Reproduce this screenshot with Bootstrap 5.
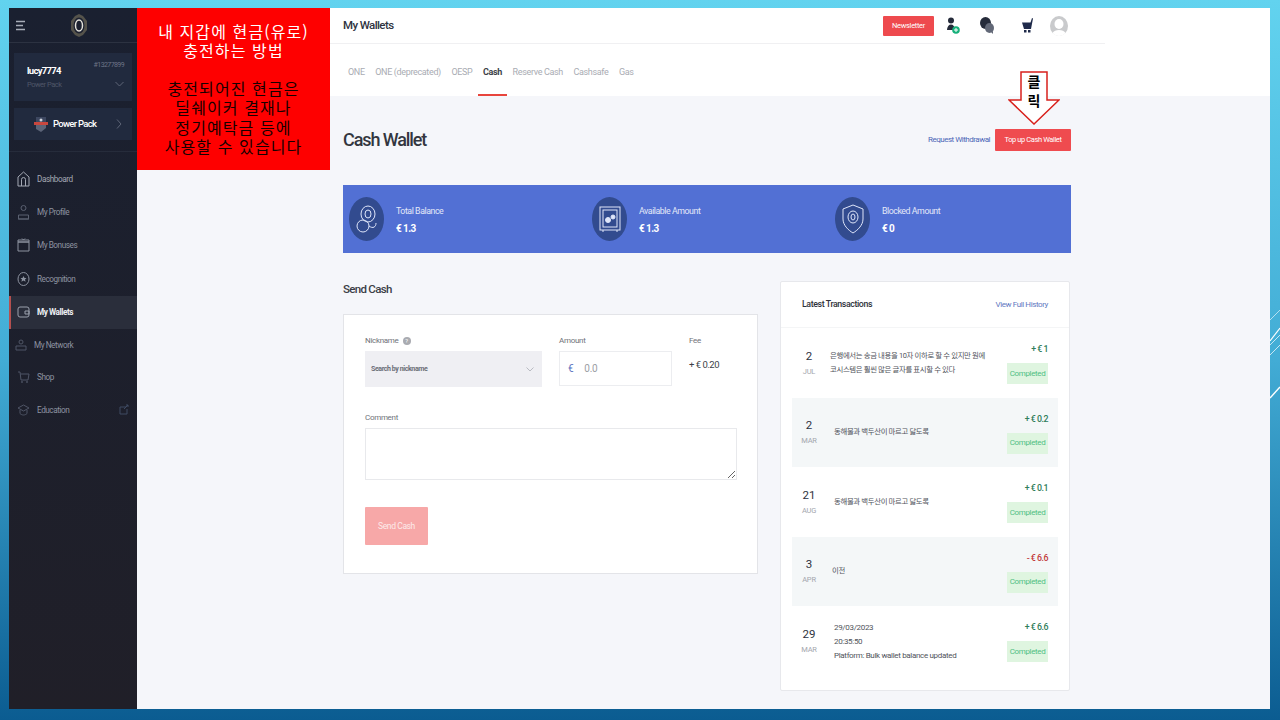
<!DOCTYPE html>
<html lang="ko">
<head>
<meta charset="UTF-8">
<title>My Wallets</title>
<link href="https://cdn.jsdelivr.net/npm/bootstrap@5.3.0/dist/css/bootstrap.min.css" rel="stylesheet">
<style>
  html, body { height: 100%; margin: 0; overflow: hidden; }
  body { background: linear-gradient(180deg, #62d3ef 0%, #42acd5 50%, #0b5c91 100%); font-family: Roboto, "Noto Sans CJK KR", sans-serif; color: #33363f; }
  .slide { height: 720px; padding: 8px 0 11px 9px; }
  .app-window { width: 1261px; height: 701px; background: #f5f6fa; }
  .deco-strip { width: 10px; padding-top: 302px; }
  /* sidebar */
  .side { width: 128px; background: linear-gradient(180deg, #1a2030, #201f28); flex: none; color: #9aa0ad; font-size: 9px; }
  .side-top { height: 35px; border-bottom: 1px solid #2c3241; padding: 0 6px; }
  .side-box { background: #212a3e; margin: 0 5px; }
  .user-box { height: 48px; margin-top: 10px; padding: 7px 8px 0 13px; }
  .user-name { color: #fff; font-size: 9.5px; font-weight: 700; letter-spacing: -.7px; margin-top: 4px; }
  .user-pack { color: #4f5668; font-size: 7.5px; letter-spacing: -.5px; margin-top: 1px; }
  .user-id { color: #6d7486; font-size: 7px; letter-spacing: -.6px; }
  .pack-box { height: 32px; margin-top: 7px; color: #fff; font-size: 9.5px; font-weight: 500; letter-spacing: -.7px; padding: 0 10px 0 19px; }
  .side-rule { border-top: 1px solid #262c3b; margin-top: 11px; height: 11px; }
  .side-link { height: 33.4px; padding: 0 8px; gap: 7px; color: #8d93a0; font-size: 8.2px; letter-spacing: -.45px; }
  .side-link.on { background: #2a2e3b; border-left: 2px solid #b4504f; padding-left: 6px; color: #eef0f4; font-weight: 700; }
  .side-link svg { flex: none; }
  /* top */
  .left-pane { width: 193px; flex: none; }
  .red-note { height: 162px; background: #fe0000; color: #fff; font-size: 16px; letter-spacing: 1.1px; line-height: 19.4px; text-align: center; padding-top: 14px; font-family: "Noto Sans CJK KR", sans-serif; }
  .red-note p { margin: 0; }
  .red-dark { color: #160000; margin-top: 18px !important; }
  .main-pane { flex: 1; min-width: 0; }
  .topbar { height: 88px; background: #fff; }
  .top-row { height: 36px; width: 775px; border-bottom: 1px solid #f0f0f2; padding-left: 13px; }
  .top-title { font-size: 11.5px; font-weight: 500; letter-spacing: -.6px; color: #2e3340; }
  .news-btn { width: 51px; height: 20px; background: #ee4a4e; color: #fff; font-size: 7.5px; letter-spacing: -.3px; border-radius: 1px; }
  .tab-row { padding-left: 18px; height: 52px; gap: 10.6px; font-size: 9px; letter-spacing: -.35px; color: #a9acb3; }
  .tab-item { position: relative; height: 100%; display: flex; align-items: center; padding-top: 5px; }
  .tab-item.on { color: #3c3f48; font-weight: 700; }
  .tab-item.on::after { content: ""; position: absolute; left: -5px; right: -5px; bottom: 0; height: 2px; background: #e8453c; }
  /* content */
  .content-wrap { width: 728px; margin-left: 13px; position: relative; }
  .wallet-head { height: 89px; padding-bottom: 2px; }
  .wallet-title { font-size: 18px; font-weight: 500; letter-spacing: -1.1px; color: #33363f; margin: 0; }
  .with-link { color: #4d66b8; font-size: 8px; letter-spacing: -.5px; text-decoration: none; }
  .topup-btn { width: 76px; height: 22px; background: #ef4b4f; color: #fff; font-size: 7.5px; letter-spacing: -.4px; border-radius: 1px; margin-left: 5px; }
  .click-arrow { position: absolute; left: 665px; top: -25px; width: 52px; height: 54px; }
  .click-txt { position: absolute; left: 665px; top: -25px; width: 52px; text-align: center; color: #000; font-size: 14px; line-height: 19px; font-weight: 700; padding-top: 1px; font-family: "Noto Sans CJK KR", sans-serif; }
  .balance-band { height: 68px; background: #5270d4; color: #fff; padding-left: 6px; }
  .balance-cell { width: 243px; flex: none; gap: 12px; }
  .coin-disc { width: 35px; height: 44px; border-radius: 50%; background: #324b8f; flex: none; }
  .bal-text { padding-top: 2px; }
  .bal-label { font-size: 8.8px; letter-spacing: -.45px; color: #e3e8f8; line-height: 12px; }
  .bal-value { font-size: 10px; font-weight: 700; letter-spacing: -.6px; line-height: 12px; margin-top: 6px; }
  .lower-row { margin-top: 28px; }
  .send-col { width: 415px; flex: none; }
  .send-title { font-size: 11.5px; font-weight: 500; letter-spacing: -.7px; color: #3b3e47; margin: 0; padding-top: 1px; height: 33px; line-height: 14px; }
  .send-form { height: 260px; background: #fff; border: 1px solid #e3e4e8; padding: 20px 21px 0; }
  .form-lbl { font-size: 8px; color: #6f7279; letter-spacing: -.3px; line-height: 12px; margin-bottom: 4px; }
  .hint-dot { display: inline-flex; width: 8px; height: 8px; border-radius: 50%; background: #a9abb1; color: #fff; font-size: 6px; align-items: center; justify-content: center; margin-left: 4px; }
  .nick-select { width: 177px; height: 36px; background: #efeff3; font-size: 7px; font-weight: 700; letter-spacing: -.4px; color: #6b6e78; padding: 0 8px 0 6px; }
  .amount-box { width: 113px; height: 35px; background: #fff; border: 1px solid #ecedf0; font-size: 10px; letter-spacing: -.3px; padding-left: 8px; gap: 11px; color: #9b9ea5; }
  .amount-box b { color: #5a72c0; font-weight: 400; }
  .fee-val { font-size: 9.5px; letter-spacing: -.5px; color: #3c3f48; margin-top: 11px; }
  .comment-box { width: 372px; height: 52px; display: block; border: 1px solid #e8e9ec; border-radius: 0; padding: 4px; background: #fff; outline: 0; }
  .send-btn { width: 63px; height: 38px; background: #f7a8a8; color: #fdeaea; font-size: 8.5px; letter-spacing: -.4px; border-radius: 1px; margin-top: 27px; }
  .tx-col { width: 290px; margin-left: 22px; flex: none; }
  .tx-card { height: 410px; background: #fff; border: 1px solid #e7e8ec; border-radius: 2px; padding: 0 11px; }
  .tx-head { height: 46px; border-bottom: 1px solid #f4f5f6; margin: 0 -11px; padding: 0 21px; }
  .tx-title { font-size: 8.8px; font-weight: 500; letter-spacing: -.4px; color: #2f323b; }
  .tx-link { color: #6278bf; font-size: 8px; letter-spacing: -.4px; text-decoration: none; }
  .tx-line { height: 69.5px; padding-right: 10px; }
  .tx-line.alt { background: #f4f7f8; }
  .tx-date { width: 34px; flex: none; text-align: center; padding-top: 1px; }
  .tx-day { font-size: 11.5px; line-height: 13px; color: #2e3340; }
  .tx-mon { font-size: 7.5px; letter-spacing: -.2px; color: #a3a6ad; line-height: 10px; margin-top: 4px; }
  .tx-text { flex: 1; font-size: 7.4px; line-height: 14px; color: #50535b; padding-left: 4px; letter-spacing: -.35px; }
  .tx-plain { font-size: 8px; letter-spacing: -.33px; padding-top: 2px; }
  .tx-side { width: 42px; flex: none; text-align: right; margin-top: 2px; }
  .tx-amt { font-size: 8.8px; font-weight: 500; letter-spacing: -.5px; color: #2f7d5a; line-height: 12px; white-space: nowrap; margin-bottom: 8px; }
  .tx-amt.minus { color: #c23b3b; }
  .tx-done { width: 41px; height: 21px; background: #dff5e0; color: #4fbf83; font-size: 8px; letter-spacing: -.35px; margin-left: auto; }
</style>
</head>
<body>
<div class="slide d-flex">
  <div class="app-window d-flex">
    <!-- sidebar -->
    <div class="side">
      <div class="side-top d-flex align-items-center">
        <svg width="12" height="11" viewBox="0 0 12 11" fill="none" stroke="#a8adb8" stroke-width="1.300"><path d="M1 1.500h9M1 5.500h7M1 9.500h9"/></svg>
        <svg style="margin-left:43px" width="18" height="25" viewBox="0 0 18 25"><path d="M9 1l4 2 4 5v9l-4 5-4 2-4-2-4-5V8l4-5z" fill="#55534b"/><ellipse cx="9" cy="12.500" rx="5.500" ry="8" fill="#1c2130"/><ellipse cx="9" cy="12.500" rx="3.500" ry="5.500" fill="none" stroke="#e4e2da" stroke-width="1.500"/></svg>
      </div>
      <div class="side-box user-box">
        <div class="d-flex justify-content-between">
          <div><div class="user-name">lucy7774</div><div class="user-pack">Power Pack</div></div>
          <div class="text-end"><div class="user-id">#13277899</div>
            <svg style="margin-top:10px;display:block;margin-left:auto" width="9" height="6" viewBox="0 0 9 6" fill="none" stroke="#5e6577"><path d="M.5 1l4 4 4-4"/></svg>
          </div>
        </div>
      </div>
      <div class="side-box pack-box d-flex align-items-center">
        <svg width="16" height="18" viewBox="0 0 16 18"><path d="M3 2h10v7H3z" fill="#3d4760"/><path d="M1 7h14v3H1z" fill="#c8473f"/><path d="M3 10h10v3l-5 4-5-3z" fill="#5c6478"/><circle cx="8" cy="5" r="1.500" fill="#cfd3db"/></svg>
        <span class="ms-1">Power Pack</span>
        <svg class="ms-auto" width="6" height="10" viewBox="0 0 6 10" fill="none" stroke="#5e6577"><path d="M1 .5l4 4.500-4 4.500"/></svg>
      </div>
      <div class="side-rule"></div>
      <div>
        <div class="side-link d-flex align-items-center" style="color:#a4a9b4">
          <svg width="13" height="16" viewBox="0 0 13 16" fill="none" stroke="#a4a9b4"><path d="M1 15V6l5.500-5L12 6v9zM4.500 15V8.500a2 2 0 0 1 4 0V15"/></svg><span>Dashboard</span>
        </div>
        <div class="side-link d-flex align-items-center">
          <svg width="13" height="16" viewBox="0 0 13 16" fill="none" stroke="#5a6070"><circle cx="6.500" cy="4" r="2.500"/><path d="M1.500 15v-4h10v4zM1 15h11"/></svg><span>My Profile</span>
        </div>
        <div class="side-link d-flex align-items-center">
          <svg width="13" height="16" viewBox="0 0 13 16" fill="none" stroke="#8d93a0"><path d="M1 5h11v9H1zM1 3h11v2H1zM5 1.500l1.500 1.500L8 1.500"/></svg><span>My Bonuses</span>
        </div>
        <div class="side-link d-flex align-items-center">
          <svg width="13" height="16" viewBox="0 0 13 16" fill="none" stroke="#8d93a0"><ellipse cx="6.500" cy="8" rx="5.500" ry="6.500"/><path d="M6.500 5l1 2h2L8 8.500l.6 2.200-2.100-1.200-2.100 1.200.6-2.200L3.500 7h2z" fill="#8d93a0" stroke="none"/></svg><span>Recognition</span>
        </div>
        <div class="side-link on d-flex align-items-center">
          <svg width="13" height="14" viewBox="0 0 13 14" fill="none" stroke="#9aa0ad"><rect x="1" y="2" width="11" height="10" rx="2"/><path d="M8 6h4v3H8z"/></svg><span>My Wallets</span>
        </div>
        <div class="side-link d-flex align-items-center" style="padding-left:6px;height:32px">
          <svg width="12" height="14" viewBox="0 0 12 14" fill="none" stroke="#4f5566"><circle cx="6" cy="4" r="2"/><path d="M1 12V8h10v4z"/></svg><span>My Network</span>
        </div>
        <div class="side-link d-flex align-items-center" style="height:32px">
          <svg width="13" height="14" viewBox="0 0 13 14" fill="none" stroke="#4f5566"><path d="M1 2h2l1 8h7l1-6H3.500"/><circle cx="5" cy="12" r=".6"/><circle cx="10" cy="12" r=".6"/></svg><span>Shop</span>
        </div>
        <div class="side-link d-flex align-items-center" style="height:34px">
          <svg width="13" height="14" viewBox="0 0 13 14" fill="none" stroke="#4f5566"><path d="M1 5l5.500-3L12 5 6.500 8zM3 7v3.500c2 2 5 2 7 0V7"/></svg><span>Education</span>
          <svg class="ms-auto" width="10" height="11" viewBox="0 0 10 11" fill="none" stroke="#3f4a63"><path d="M7 3H1v7h7V5M5 5l4-4M7 1h2v2"/></svg>
        </div>
      </div>
    </div>

    <!-- red note column -->
    <div class="left-pane">
      <div class="red-note">
        <p>내 지갑에 현금(유로)<br>충전하는 방법</p>
        <p class="red-dark">충전되어진 현금은<br>딜쉐이커 결재나<br>정기예탁금 등에<br>사용할 수 있습니다</p>
      </div>
    </div>

    <!-- main -->
    <div class="main-pane">
      <div class="topbar">
        <div class="top-row d-flex align-items-center">
          <span class="top-title">My Wallets</span>
          <div class="d-flex align-items-center ms-auto" style="margin-right:37px">
            <div class="news-btn d-flex align-items-center justify-content-center">Newsletter</div>
            <svg style="margin-left:12px" width="14" height="18" viewBox="0 0 14 18"><circle cx="5" cy="3.500" r="3" fill="#252b3a"/><path d="M1 13c0-7.500 8-7.500 8 0z" fill="#252b3a"/><circle cx="10" cy="13" r="3.800" fill="#16b07a"/><path d="M8 13h4M10 11v4" stroke="#fff"/></svg>
            <svg style="margin-left:20px" width="14" height="17" viewBox="0 0 14 17"><ellipse cx="5.500" cy="6" rx="5.500" ry="6" fill="#252b3a"/><ellipse cx="9.500" cy="11" rx="4.500" ry="5" fill="#626877"/><path d="M11 15l2 2v-3z" fill="#626877"/></svg>
            <svg style="margin-left:27px" width="13" height="15" viewBox="0 0 13 15"><path d="M1 4.500h8.500L11 0l1 .5L10 11H3z" fill="#1f2a4a"/><rect x="3" y="12" width="2.500" height="2.500" fill="#1f2a4a"/><rect x="7" y="12" width="2.500" height="2.500" fill="#1f2a4a"/></svg>
            <svg style="margin-left:16px" width="18" height="20" viewBox="0 0 18 20"><ellipse cx="9" cy="10" rx="9" ry="10" fill="#c9cacc"/><ellipse cx="9" cy="8" rx="4.500" ry="5" fill="#fff"/><path d="M2.500 17c2-4 11-4 13 0-3 4-10 4-13 0z" fill="#fff"/></svg>
          </div>
        </div>
        <div class="tab-row d-flex">
          <div class="tab-item">ONE</div>
          <div class="tab-item">ONE (deprecated)</div>
          <div class="tab-item">OESP</div>
          <div class="tab-item on">Cash</div>
          <div class="tab-item">Reserve Cash</div>
          <div class="tab-item">Cashsafe</div>
          <div class="tab-item">Gas</div>
        </div>
      </div>

      <div class="content-wrap">
        <div class="wallet-head d-flex align-items-center">
          <h1 class="wallet-title">Cash Wallet</h1>
          <div class="ms-auto d-flex align-items-center">
            <a class="with-link" href="#">Request Withdrawal</a>
            <div class="topup-btn d-flex align-items-center justify-content-center">Top up Cash Wallet</div>
          </div>
        </div>
        <svg class="click-arrow" viewBox="0 0 52 54"><path d="M13 1h26v28h12L26 53 1 29h12z" fill="#fff" stroke="#d8201c" stroke-width="1.500"/></svg>
        <div class="click-txt">클<br>릭</div>

        <div class="balance-band d-flex align-items-center">
          <div class="balance-cell d-flex align-items-center">
            <div class="coin-disc d-flex align-items-center justify-content-center">
              <svg width="22" height="30" viewBox="0 0 22 30" fill="none" stroke="#dfe6fa"><ellipse cx="12" cy="10" rx="7" ry="8"/><ellipse cx="12" cy="10" rx="3" ry="4"/><ellipse cx="7" cy="22" rx="6" ry="6"/><path d="M13 22c4 3 7 1 7-3"/></svg>
            </div>
            <div class="bal-text"><div class="bal-label">Total Balance</div><div class="bal-value">€ 1.3</div></div>
          </div>
          <div class="balance-cell d-flex align-items-center">
            <div class="coin-disc d-flex align-items-center justify-content-center">
              <svg width="22" height="30" viewBox="0 0 22 30" fill="none" stroke="#dfe6fa"><rect x="1" y="3" width="20" height="23"/><rect x="4" y="6" width="14" height="17"/><circle cx="9" cy="16" r="2.500" fill="#dfe6fa"/><circle cx="14" cy="13" r="2" fill="#dfe6fa"/><path d="M4 26v2M18 26v2"/></svg>
            </div>
            <div class="bal-text"><div class="bal-label">Available Amount</div><div class="bal-value">€ 1.3</div></div>
          </div>
          <div class="balance-cell d-flex align-items-center">
            <div class="coin-disc d-flex align-items-center justify-content-center">
              <svg width="22" height="30" viewBox="0 0 22 30" fill="none" stroke="#dfe6fa"><path d="M11 1l10 4v10c0 6-5 11-10 14C6 26 1 21 1 15V5z"/><ellipse cx="11" cy="13" rx="5" ry="6"/><ellipse cx="11" cy="13" rx="2" ry="3"/></svg>
            </div>
            <div class="bal-text"><div class="bal-label">Blocked Amount</div><div class="bal-value">€ 0</div></div>
          </div>
        </div>

        <div class="lower-row d-flex">
          <div class="send-col">
            <h2 class="send-title">Send Cash</h2>
            <div class="send-form">
              <div class="d-flex" style="height:77px">
                <div style="width:194px">
                  <div class="form-lbl">Nickname<span class="hint-dot">?</span></div>
                  <div class="nick-select d-flex align-items-center">Search by nickname
                    <svg class="ms-auto" width="8" height="5" viewBox="0 0 8 5" fill="none" stroke="#b9bbc2"><path d="M.5.5L4 4 7.500.5"/></svg>
                  </div>
                </div>
                <div style="width:130px">
                  <div class="form-lbl">Amount</div>
                  <div class="amount-box d-flex align-items-center"><b>€</b><span>0.0</span></div>
                </div>
                <div>
                  <div class="form-lbl">Fee</div>
                  <div class="fee-val">+ € 0.20</div>
                </div>
              </div>
              <div class="form-lbl">Comment</div>
              <textarea class="comment-box"></textarea>
              <div class="send-btn d-flex align-items-center justify-content-center">Send Cash</div>
            </div>
          </div>

          <div class="tx-col">
            <div class="tx-card">
              <div class="tx-head d-flex align-items-center justify-content-between">
                <span class="tx-title">Latest Transactions</span>
                <a class="tx-link" href="#">View Full History</a>
              </div>
              <div class="tx-line d-flex align-items-center">
                <div class="tx-date"><div class="tx-day">2</div><div class="tx-mon">JUL</div></div>
                <div class="tx-text">은행에서는 송금 내용을 10자 이하로 할 수 있지만 원에<br>코시스템은 훨씬 많은 글자를 표시할 수 있다</div>
                <div class="tx-side"><div class="tx-amt">+ € 1</div><div class="tx-done d-flex align-items-center justify-content-center">Completed</div></div>
              </div>
              <div class="tx-line alt d-flex align-items-center">
                <div class="tx-date"><div class="tx-day">2</div><div class="tx-mon">MAR</div></div>
                <div class="tx-text" style="padding-left:8px">동해물과 백두산이 마르고 닳도록</div>
                <div class="tx-side"><div class="tx-amt">+ € 0.2</div><div class="tx-done d-flex align-items-center justify-content-center">Completed</div></div>
              </div>
              <div class="tx-line d-flex align-items-center">
                <div class="tx-date"><div class="tx-day">21</div><div class="tx-mon">AUG</div></div>
                <div class="tx-text" style="padding-left:8px">동해물과 백두산이 마르고 닳도록</div>
                <div class="tx-side"><div class="tx-amt">+ € 0.1</div><div class="tx-done d-flex align-items-center justify-content-center">Completed</div></div>
              </div>
              <div class="tx-line alt d-flex align-items-center">
                <div class="tx-date"><div class="tx-day">3</div><div class="tx-mon">APR</div></div>
                <div class="tx-text" style="padding-left:6px">이전</div>
                <div class="tx-side"><div class="tx-amt minus">- € 6.6</div><div class="tx-done d-flex align-items-center justify-content-center">Completed</div></div>
              </div>
              <div class="tx-line d-flex align-items-center">
                <div class="tx-date"><div class="tx-day">29</div><div class="tx-mon">MAR</div></div>
                <div class="tx-text tx-plain" style="padding-left:8px">29/03/2023<br>20:35:50<br>Platform: Bulk wallet balance updated</div>
                <div class="tx-side"><div class="tx-amt">+ € 6.6</div><div class="tx-done d-flex align-items-center justify-content-center">Completed</div></div>
              </div>
            </div>
          </div>
        </div>
      </div>
    </div>
  </div>
  <div class="deco-strip">
    <svg width="10" height="100" viewBox="0 0 10 100" fill="none" stroke="#fff"><path d="M0 10L10 0" stroke-width=".6"/><path d="M0 31L10 18" stroke-width="1.200"/><path d="M0 35L10 25" stroke-width=".7"/><path d="M0 45L10 35" stroke-width=".7"/><path d="M0 88L10 77" stroke-width="1.500"/></svg>
  </div>
</div>
</body>
</html>
